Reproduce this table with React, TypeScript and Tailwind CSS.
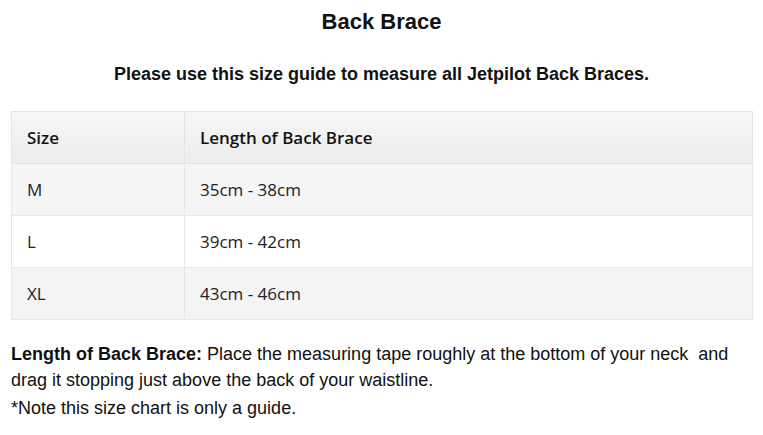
const rows = [
  { size: 'M', length: '35cm - 38cm', bg: 'bg-[#f5f5f5]' },
  { size: 'L', length: '39cm - 42cm', bg: 'bg-white' },
  { size: 'XL', length: '43cm - 46cm', bg: 'bg-[#f4f4f4]' },
];

export default function App() {
  return (
    <div className="w-[763px] h-[435px] bg-white text-[#111] font-['Liberation_Sans',Arial,sans-serif] px-[11px] overflow-hidden">
      {/* Heading */}
      <h1 className="pt-[8px] text-center text-[22px] leading-[28px] font-bold">Back Brace</h1>
      <p className="mt-[26px] text-center text-[18px] leading-[24px] font-bold">
        Please use this size guide to measure all Jetpilot Back Braces.
      </p>

      {/* Size table */}
      <table className="mt-[25px] w-[742px] border-collapse font-['Open_Sans',sans-serif] text-[17px] text-[#222]">
        <thead>
          <tr className="h-[52px] bg-gradient-to-b from-[#f7f7f7] to-[#ececec]">
            <th className="w-[173px] border border-[#e3e3e3] px-[15px] text-left font-semibold text-[#111]">Size</th>
            <th className="border border-[#e3e3e3] px-[15px] text-left font-semibold text-[#111]">Length of Back Brace</th>
          </tr>
        </thead>
        <tbody>
          {rows.map((r) => (
            <tr key={r.size} className={`h-[52px] ${r.bg}`}>
              <td className="border border-[#e7e7e7] px-[15px]">{r.size}</td>
              <td className="border border-[#e7e7e7] px-[15px]">{r.length}</td>
            </tr>
          ))}
        </tbody>
      </table>

      {/* Notes */}
      <p className="mt-[21px] text-[18px] leading-[26px]">
        <b>Length of Back Brace:</b> Place the measuring tape roughly at the bottom of your neck&nbsp; and drag it stopping just above the back of your waistline.
      </p>
      <p className="mt-[2px] text-[18px] leading-[26px]">*Note this size chart is only a guide.</p>
    </div>
  );
}
